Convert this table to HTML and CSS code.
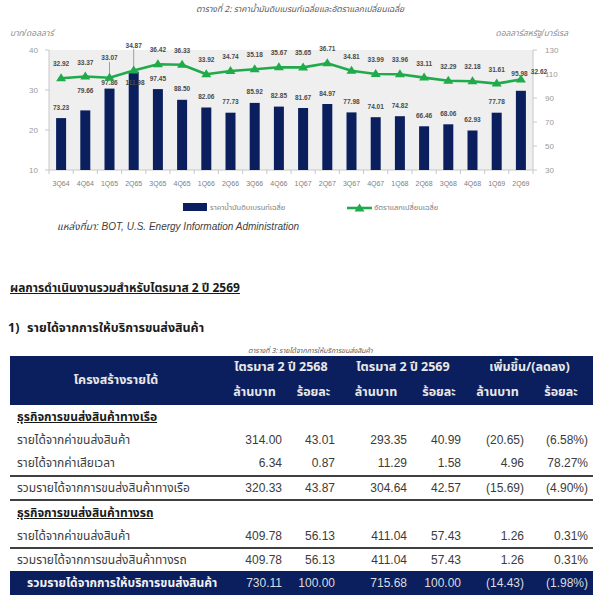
FILE: index.html
```html
<!DOCTYPE html>
<html lang="th">
<head>
<meta charset="utf-8">
<title>ผลการดำเนินงาน</title>
<link rel="stylesheet" href="styles.css">
</head>
<body>
<div class="page">
  <p class="chart-caption">ตารางที่ 2: ราคาน้ำมันดิบเบรนท์เฉลี่ยและอัตราแลกเปลี่ยนเฉลี่ย</p>
  <svg class="chart" width="600" height="204" viewBox="0 16 600 204">
    <text class="axis-title" x="10" y="36">บาท/ดอลลาร์</text>
    <text class="axis-title" x="568" y="36" text-anchor="end">ดอลลาร์สหรัฐ/บาร์เรล</text>
    <rect class="plot" x="49" y="50" width="484" height="120"/>
    <g class="axis">
      <line x1="49" y1="50" x2="49" y2="170"/>
      <line x1="533" y1="50" x2="533" y2="170"/>
      <line x1="49" y1="170" x2="533" y2="170"/>
      <line x1="45" y1="50" x2="49" y2="50"/><line x1="45" y1="90" x2="49" y2="90"/><line x1="45" y1="130" x2="49" y2="130"/><line x1="45" y1="170" x2="49" y2="170"/>
      <line x1="533" y1="50" x2="537" y2="50"/><line x1="533" y1="74" x2="537" y2="74"/><line x1="533" y1="98" x2="537" y2="98"/><line x1="533" y1="122" x2="537" y2="122"/><line x1="533" y1="146" x2="537" y2="146"/><line x1="533" y1="170" x2="537" y2="170"/>
      <path d="M49 170v4M73.2 170v4M97.4 170v4M121.6 170v4M145.8 170v4M170 170v4M194.2 170v4M218.4 170v4M242.6 170v4M266.8 170v4M291 170v4M315.2 170v4M339.4 170v4M363.6 170v4M387.8 170v4M412 170v4M436.2 170v4M460.4 170v4M484.6 170v4M508.8 170v4M533 170v4"/>
    </g>
    <g class="ytick" text-anchor="end">
      <text x="38" y="53">40</text><text x="38" y="93">30</text><text x="38" y="133">20</text><text x="38" y="173">10</text>
    </g>
    <g class="ytick">
      <text x="545" y="53">130</text><text x="545" y="77">110</text><text x="545" y="101">90</text><text x="545" y="125">70</text><text x="545" y="149">50</text><text x="545" y="173">30</text>
    </g>
    <g class="bars">
      <rect x="56.1" y="118.1" width="10" height="51.9"/>
      <rect x="80.3" y="110.4" width="10" height="59.6"/>
      <rect x="104.5" y="88.6" width="10" height="81.4"/>
      <rect x="128.7" y="71.6" width="10" height="98.4"/>
      <rect x="152.9" y="89.1" width="10" height="80.9"/>
      <rect x="177.1" y="99.8" width="10" height="70.2"/>
      <rect x="201.3" y="107.5" width="10" height="62.5"/>
      <rect x="225.5" y="112.7" width="10" height="57.3"/>
      <rect x="249.7" y="102.9" width="10" height="67.1"/>
      <rect x="273.9" y="106.6" width="10" height="63.4"/>
      <rect x="298.1" y="108" width="10" height="62"/>
      <rect x="322.3" y="104" width="10" height="66"/>
      <rect x="346.5" y="112.4" width="10" height="57.6"/>
      <rect x="370.7" y="117.2" width="10" height="52.8"/>
      <rect x="394.9" y="116.2" width="10" height="53.8"/>
      <rect x="419.1" y="126.3" width="10" height="43.7"/>
      <rect x="443.3" y="124.3" width="10" height="45.7"/>
      <rect x="467.5" y="130.5" width="10" height="39.5"/>
      <rect x="491.7" y="112.7" width="10" height="57.3"/>
      <rect x="515.9" y="90.8" width="10" height="79.2"/>
    </g>
    <g class="xtick" text-anchor="middle">
      <text x="61.1" y="186">3Q64</text><text x="85.3" y="186">4Q64</text><text x="109.5" y="186">1Q65</text><text x="133.7" y="186">2Q65</text><text x="157.9" y="186">3Q65</text><text x="182.1" y="186">4Q65</text><text x="206.3" y="186">1Q66</text><text x="230.5" y="186">2Q66</text><text x="254.7" y="186">3Q66</text><text x="278.9" y="186">4Q66</text><text x="303.1" y="186">1Q67</text><text x="327.3" y="186">2Q67</text><text x="351.5" y="186">3Q67</text><text x="375.7" y="186">4Q67</text><text x="399.9" y="186">1Q68</text><text x="424.1" y="186">2Q68</text><text x="448.3" y="186">3Q68</text><text x="472.5" y="186">4Q68</text><text x="496.7" y="186">1Q69</text><text x="520.9" y="186">2Q69</text>
    </g>
    <g class="leader">
      <line x1="109.5" y1="62" x2="109.5" y2="76"/>
      <line x1="133.7" y1="49" x2="133.7" y2="70"/>
    </g>
    <g class="barlabel" text-anchor="middle">
      <text x="61.1" y="109.6">73.23</text><text x="85.3" y="92.5">79.66</text><text x="109.5" y="84.5">97.86</text><text x="135" y="84.5">111.98</text><text x="157.9" y="80.6">97.45</text><text x="182.1" y="91.3">88.50</text><text x="206.3" y="99">82.06</text><text x="230.5" y="104.2">77.73</text><text x="254.7" y="94.4">85.92</text><text x="278.9" y="98.1">82.85</text><text x="303.1" y="99.5">81.67</text><text x="327.3" y="95.5">84.97</text><text x="351.5" y="103.9">77.98</text><text x="375.7" y="108.7">74.01</text><text x="399.9" y="107.7">74.82</text><text x="424.1" y="117.8">66.46</text><text x="448.3" y="115.8">68.06</text><text x="472.5" y="122">62.93</text><text x="496.7" y="104.2">77.78</text><text x="519.5" y="75.5">95.98</text>
    </g>
    <polyline class="fx" points="61.1,78.3 85.3,76.5 109.5,77.7 133.7,70.5 157.9,64.3 182.1,64.7 206.3,74.3 230.5,71 254.7,69.3 278.9,67.3 303.1,67.4 327.3,63.2 351.5,70.8 375.7,74 399.9,74.2 424.1,77.6 448.3,80.8 472.5,81.3 496.7,83.6 520.9,79.5"/>
    <g class="markers">
      <path d="M61.1 73.3l5 8h-10zM85.3 71.5l5 8h-10zM109.5 72.7l5 8h-10zM133.7 65.5l5 8h-10zM157.9 59.3l5 8h-10zM182.1 59.7l5 8h-10zM206.3 69.3l5 8h-10zM230.5 66l5 8h-10zM254.7 64.3l5 8h-10zM278.9 62.3l5 8h-10zM303.1 62.4l5 8h-10zM327.3 58.2l5 8h-10zM351.5 65.8l5 8h-10zM375.7 69l5 8h-10zM399.9 69.2l5 8h-10zM424.1 72.6l5 8h-10zM448.3 75.8l5 8h-10zM472.5 76.3l5 8h-10zM496.7 78.6l5 8h-10zM520.9 74.5l5 8h-10z"/>
    </g>
    <g class="linelabel" text-anchor="middle">
      <text x="61.1" y="66.3">32.92</text><text x="85.3" y="64.5">33.37</text><text x="109.5" y="59.5">33.07</text><text x="133.7" y="47.5">34.87</text><text x="157.9" y="52.3">36.42</text><text x="182.1" y="52.7">36.33</text><text x="206.3" y="62.3">33.92</text><text x="230.5" y="59">34.74</text><text x="254.7" y="57.3">35.18</text><text x="278.9" y="55.3">35.67</text><text x="303.1" y="55.4">35.65</text><text x="327.3" y="51.2">36.71</text><text x="351.5" y="58.8">34.81</text><text x="375.7" y="62">33.99</text><text x="399.9" y="62.2">33.96</text><text x="424.1" y="65.6">33.11</text><text x="448.3" y="68.8">32.29</text><text x="472.5" y="69.3">32.18</text><text x="496.7" y="71.6">31.61</text><text x="539" y="73.5">32.62</text>
    </g>
    <rect class="swatch" x="183" y="203" width="24" height="8"/>
    <text class="legend" x="210" y="210">ราคาน้ำมันดิบเบรนท์เฉลี่ย</text>
    <line class="fx" x1="347" y1="208" x2="372" y2="208"/>
    <path class="markers" d="M359.5 203.5l5 8h-10z"/>
    <text class="legend" x="374" y="210">อัตราแลกเปลี่ยนเฉลี่ย</text>
  </svg>
  <p class="source">แหล่งที่มา: BOT, U.S. Energy Information Administration</p>

  <h2 class="heading">ผลการดำเนินงานรวมสำหรับไตรมาส 2 ปี 2569</h2>
  <h3 class="subheading"><span class="num">1)</span><span>รายได้จากการให้บริการขนส่งสินค้า</span></h3>
  <p class="table-caption">ตารางที่ 3: รายได้จากการให้บริการขนส่งสินค้า</p>

  <div class="table">
    <div class="thead">
      <div class="th th-main">โครงสร้างรายได้</div>
      <div class="th th-group g1">ไตรมาส 2 ปี 2568</div>
      <div class="th th-group g2">ไตรมาส 2 ปี 2569</div>
      <div class="th th-group g3">เพิ่มขึ้น/(ลดลง)</div>
      <div class="th th-sub">ล้านบาท</div>
      <div class="th th-sub">ร้อยละ</div>
      <div class="th th-sub">ล้านบาท</div>
      <div class="th th-sub">ร้อยละ</div>
      <div class="th th-sub">ล้านบาท</div>
      <div class="th th-sub">ร้อยละ</div>
    </div>

    <div class="row section r-a"><div class="label">ธุรกิจการขนส่งสินค้าทางเรือ</div></div>
    <div class="row r-b"><div class="label">รายได้จากค่าขนส่งสินค้า</div><div>314.00</div><div>43.01</div><div>293.35</div><div>40.99</div><div>(20.65)</div><div>(6.58%)</div></div>
    <div class="row r-c"><div class="label">รายได้จากค่าเสียเวลา</div><div>6.34</div><div>0.87</div><div>11.29</div><div>1.58</div><div>4.96</div><div>78.27%</div></div>
    <div class="row subtotal r-d"><div class="label">รวมรายได้จากการขนส่งสินค้าทางเรือ</div><div>320.33</div><div>43.87</div><div>304.64</div><div>42.57</div><div>(15.69)</div><div>(4.90%)</div></div>
    <div class="row section r-e"><div class="label">ธุรกิจการขนส่งสินค้าทางรถ</div></div>
    <div class="row r-f"><div class="label">รายได้จากค่าขนส่งสินค้า</div><div>409.78</div><div>56.13</div><div>411.04</div><div>57.43</div><div>1.26</div><div>0.31%</div></div>
    <div class="row subtotal2 r-g"><div class="label">รวมรายได้จากการขนส่งสินค้าทางรถ</div><div>409.78</div><div>56.13</div><div>411.04</div><div>57.43</div><div>1.26</div><div>0.31%</div></div>
    <div class="row total"><div class="label">รวมรายได้จากการให้บริการขนส่งสินค้า</div><div>730.11</div><div>100.00</div><div>715.68</div><div>100.00</div><div>(14.43)</div><div>(1.98%)</div></div>
  </div>
</div>
</body>
</html>
```

FILE: styles.css
```css
html, body {
  margin: 0;
  padding: 0;
  background: #ffffff;
}

body {
  font-family: "Noto Sans Thai", "Tahoma", "Loma", "Liberation Sans", "Noto Sans", sans-serif;
  color: #333333;
}

.page {
  width: 600px;
  height: 602px;
  overflow: hidden;
}

.chart-caption {
  margin: 0;
  padding-top: 4px;
  height: 12px;
  line-height: 12px;
  font-size: 8.5px;
  font-style: italic;
  color: #595959;
  text-align: center;
}

.chart {
  display: block;
  font-family: "Liberation Sans", "Noto Sans Thai", "Noto Sans", sans-serif;
}

.axis-title {
  font-size: 8.5px;
  font-style: italic;
  fill: #8c8c8c;
}

.plot {
  fill: #efefef;
}

.axis line,
.axis path {
  stroke: #c8c8c8;
  stroke-width: 1;
  fill: none;
}

.ytick text {
  font-size: 8px;
  fill: #9a9a9a;
}

.xtick text {
  font-size: 7px;
  fill: #808080;
}

.bars rect,
.swatch {
  fill: #0b1f5e;
}

.leader line {
  stroke: #8a8a8a;
  stroke-width: 0.8;
}

.barlabel text,
.linelabel text {
  font-size: 6.5px;
  font-weight: bold;
  fill: #4a4a4a;
}

.fx {
  fill: none;
  stroke: #1fab4a;
  stroke-width: 2.6;
  stroke-linejoin: round;
}

.markers,
.markers path {
  fill: #1fab4a;
}

.legend {
  font-size: 7.5px;
  fill: #808080;
}

.source {
  margin: 0;
  padding-left: 57px;
  height: 14px;
  line-height: 14px;
  font-family: "Liberation Sans", "Noto Sans Thai", sans-serif;
  font-size: 10px;
  font-style: italic;
  color: #404040;
}

.heading {
  margin: 45px 0 0 10px;
  height: 18px;
  line-height: 18px;
  font-size: 12px;
  font-weight: bold;
  text-decoration: underline;
  color: #1a1a1a;
}

.subheading {
  margin: 23px 0 0 8px;
  height: 18px;
  line-height: 18px;
  font-size: 12.5px;
  font-weight: bold;
  color: #1a1a1a;
  display: flex;
}

.subheading .num {
  width: 19px;
}

.table-caption {
  margin: 8px 0 0 0;
  padding-left: 248px;
  height: 10px;
  line-height: 10px;
  font-size: 7px;
  font-style: italic;
  color: #595959;
}

.table {
  margin-left: 10px;
  width: 583px;
}

.thead,
.row {
  display: grid;
  grid-template-columns: 212px 65px 53px 72px 54px 63px 64px;
}

.thead {
  background: #0b1f5e;
  grid-template-rows: 23px 26px;
  color: #e8e8e8;
  font-size: 12.5px;
  font-weight: bold;
}

.th {
  display: flex;
  align-items: center;
  justify-content: center;
  white-space: nowrap;
}

.th-main {
  grid-row: 1 / span 2;
}

.th-group {
  grid-column: span 2;
}

.row {
  align-items: center;
  height: 23px;
  font-size: 12px;
  color: #3b3b3b;
}

.row > div {
  text-align: right;
  padding-right: 5px;
  font-family: "Liberation Sans", "Noto Sans", sans-serif;
}

.row > div.label {
  text-align: left;
  padding-left: 7px;
  padding-right: 0;
  white-space: nowrap;
  font-family: "Noto Sans Thai", "Tahoma", "Loma", "Liberation Sans", sans-serif;
}

.section .label {
  font-weight: bold;
  text-decoration: underline;
  color: #1a1a1a;
}

.r-a { height: 23px; }
.r-b { height: 23px; }
.r-c { height: 24px; }
.r-d {
  height: 22px;
  border-top: 2px solid #404040;
  border-bottom: 2px solid #404040;
}
.r-e { height: 24px; }
.r-f { height: 22px; }
.r-g {
  height: 21px;
  border-top: 2px solid #404040;
  margin-bottom: 1px;
}

.total {
  height: 24px;
  background: #0b1f5e;
  color: #dcdcdc;
}

.total > div.label {
  padding-left: 17px;
  font-weight: bold;
  color: #f2f2f2;
}
```
